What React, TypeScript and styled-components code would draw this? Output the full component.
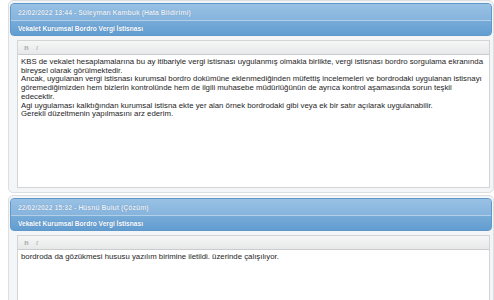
import React from "react";
import styled, { createGlobalStyle } from "styled-components";

const GlobalStyle = createGlobalStyle`
  html, body { margin: 0; padding: 0; background: #ffffff; }
  body { font-family: "Liberation Sans", Arial, sans-serif; }
`;

const Page = styled.div`
  padding: 0 0 0 8px;
  display: flex;
  flex-direction: column;
  gap: 2px;
`;

const Panel = styled.section`
  border: 1px solid #dcdfe2;
  border-radius: 5px;
  background: #f4f5f6;
  padding: 2px 1px;
`;

const Header = styled.div`
  border: 1px solid #5e97c8;
  border-radius: 4px;
  overflow: hidden;
  background: linear-gradient(#93bde2, #6aa3d4);
  display: flex;
  flex-direction: column;
`;

const HeaderRow = styled.div<{ $title?: boolean }>`
  height: ${(p) => (p.$title ? 14 : 16)}px;
  display: flex;
  align-items: center;
  padding-left: 7px;
  font-family: "Liberation Sans", Arial, sans-serif;
  font-size: ${(p) => (p.$title ? 6.6 : 6.9)}px;
  font-weight: bold;
  color: ${(p) => (p.$title ? "#ffffff" : "#e6eff8")};
  text-shadow: 0 0 1px rgba(40, 80, 130, 0.45);
  background: ${(p) =>
    p.$title
      ? "linear-gradient(#77abd8, #629dd1)"
      : "linear-gradient(#98c1e4, #86b4dd)"};
  border-top: ${(p) => (p.$title ? "1px solid #b3cfe8" : "none")};
`;

const Body = styled.div`
  padding: 4px 2px 2px 7px;
`;

const Editor = styled.div<{ $height: number }>`
  border: 1px solid #d2d4d6;
  background: #ffffff;
  height: ${(p) => p.$height}px;
  display: flex;
  flex-direction: column;
`;

const Toolbar = styled.div`
  height: 13px;
  flex-shrink: 0;
  border-bottom: 1px solid #c9cbcd;
  background: linear-gradient(#f6f6f6, #e7e8e9);
  display: flex;
  align-items: center;
  gap: 7px;
  padding-left: 6px;
`;

const ToolButton = styled.span<{ $italic?: boolean }>`
  font-family: "Liberation Serif", "Times New Roman", serif;
  font-size: 7px;
  color: #b0b2b4;
  font-weight: ${(p) => (p.$italic ? "normal" : "bold")};
  font-style: ${(p) => (p.$italic ? "italic" : "normal")};
`;

const Content = styled.div`
  padding: 3px 1px 3px 3px;
  font-family: "Liberation Sans", Arial, sans-serif;
  font-size: 7.8px;
  line-height: 8.7px;
  color: #1e1e1e;
  white-space: nowrap;
  overflow: hidden;
`;

type Entry = {
  meta: string;
  title: string;
  height: number;
  lines: string[];
};

const entries: Entry[] = [
  {
    meta: "22/02/2022 13:44 - Süleyman Kambuk (Hata Bildirimi)",
    title: "Vekalet Kurumsal Bordro Vergi İstisnası",
    height: 146,
    lines: [
      "KBS de vekalet hesaplamalarına bu ay itibariyle vergi istisnası uygulanmış olmakla birlikte, vergi istisnası bordro sorgulama ekranında",
      "bireysel olarak görülmektedir.",
      "Ancak, uygulanan vergi istisnası kurumsal bordro dokümüne eklenmediğinden müfettiş incelemeleri ve bordrodaki uygulanan istisnayı",
      "göremediğimizden hem bizlerin kontrolünde hem de ilgili muhasebe müdürlüğünün de ayrıca kontrol aşamasında sorun teşkil",
      "edecektir.",
      "Agi uygulaması kalktığından kurumsal istisna ekte yer alan örnek bordrodaki gibi veya ek bir satır açılarak uygulanabilir.",
      "Gerekli düzeltmenin yapılmasını arz ederim.",
    ],
  },
  {
    meta: "22/02/2022 15:32 - Hüsnü Bulut (Çözüm)",
    title: "Vekalet Kurumsal Bordro Vergi İstisnası",
    height: 120,
    lines: [
      "bordroda da gözükmesi hususu yazılım birimine iletildi. üzerinde çalışılıyor.",
    ],
  },
];

export default function App() {
  return (
    <>
      <GlobalStyle />
      <Page>
        {entries.map((e, i) => (
          <Panel key={i}>
            <Header>
              <HeaderRow>{e.meta}</HeaderRow>
              <HeaderRow $title>{e.title}</HeaderRow>
            </Header>
            <Body>
              <Editor $height={e.height}>
                <Toolbar>
                  <ToolButton>B</ToolButton>
                  <ToolButton $italic>I</ToolButton>
                </Toolbar>
                <Content>
                  {e.lines.map((t, j) => (
                    <div key={j}>{t}</div>
                  ))}
                </Content>
              </Editor>
            </Body>
          </Panel>
        ))}
      </Page>
    </>
  );
}
